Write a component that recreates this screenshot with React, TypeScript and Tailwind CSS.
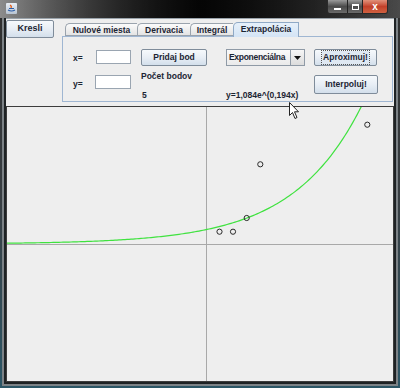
import React from "react";

const F = "font-['Liberation_Sans',Arial,sans-serif]";

function Btn({ w, h, children, focus }: { w: string; h: string; children: React.ReactNode; focus?: boolean }) {
  return (
    <div
      className={`${w} ${h} flex items-center justify-center rounded-[2px] border border-[#7f8c9a] bg-gradient-to-b from-[#f6f9fc] via-[#e8eef5] to-[#d3dfeb] text-[8.5px] font-bold text-[#1c2533]`}
    >
      <span className={focus ? "px-[1px] outline outline-1 outline-dotted outline-[#555] bg-[#dfe8f2]" : ""}>{children}</span>
    </div>
  );
}

function Field({ w }: { w: string }) {
  return <div className={`${w} h-[14px] border border-[#9aa5b1] bg-white`} />;
}

function Tab({ w, label, selected }: { w: string; label: string; selected?: boolean }) {
  return (
    <div
      className={`${w} ${
        selected
          ? "h-[15px] bg-gradient-to-b from-[#e6f0fa] to-[#d4e4f5] border-[#8fa9c6] z-10 -mb-[1px] border-b-0"
          : "h-[13px] bg-gradient-to-b from-[#fbfbfb] to-[#e4e4e4] border-[#9aa3ad]"
      } border border-r-0 last:border-r relative flex items-start justify-center pt-[1px] rounded-tl-[5px] text-[8.5px] font-bold text-[#1c2533] leading-[11px]`}
    >
      {label}
    </div>
  );
}

export default function App() {
  const pts: string[] = [];
  for (let sx = 0; sx <= 362; sx += 2) {
    const u = (sx - 199.5) / 13.33;
    const y = 137 - 13.33 * 1.084 * Math.exp(0.194 * u);
    pts.push(`${sx},${y.toFixed(2)}`);
  }
  const dots: [number, number][] = [
    [212.5, 124.7],
    [226, 124.7],
    [239.7, 111],
    [253.3, 57.3],
    [360.3, 17.7],
  ];

  return (
    <div className={`${F} relative w-[400px] h-[388px] overflow-hidden bg-gradient-to-b from-[#2e2e2e] via-[#383e42] to-[#2b5666] flex flex-col`}>
      {/* title bar */}
      <div className="h-[18px] shrink-0 flex items-start bg-gradient-to-r from-[#8c8c8c] via-[#0c0c0c] to-[#4a4a4a] relative">
        <div className="absolute inset-0 bg-gradient-to-r from-transparent via-[#000000] to-transparent opacity-60" />
        <div className="relative ml-[6px] mt-[3px] w-[11px] h-[11px] rounded-[1px] bg-gradient-to-b from-[#e9eef5] to-[#b8c4d2] flex items-center justify-center">
          <svg width="9" height="9" viewBox="0 0 9 9">
            <path d="M3 1 Q5 2 4 4" stroke="#e65a10" strokeWidth="1.2" fill="none" />
            <path d="M1 6 Q4.5 8 8 6" stroke="#2a5da8" strokeWidth="1.2" fill="none" />
            <path d="M2 4.5 L7 4.5" stroke="#2a5da8" strokeWidth="1" />
          </svg>
        </div>
        <div className="flex-1" />
        <div className="relative mr-[12px] flex h-[14px] border border-t-0 border-[#2a2a2a] rounded-b-[3px] overflow-hidden">
          <div className="w-[20px] h-full bg-gradient-to-b from-[#9a9a9a] via-[#4a4a4a] to-[#6a6a6a] flex items-end justify-center pb-[3px] border-r border-[#222]">
            <div className="w-[7px] h-[2px] bg-white" />
          </div>
          <div className="w-[15px] h-full bg-gradient-to-b from-[#9a9a9a] via-[#4a4a4a] to-[#6a6a6a] flex items-center justify-center border-r border-[#222]">
            <div className="w-[7px] h-[6px] border border-white border-t-2" />
          </div>
          <div className="w-[24px] h-full bg-gradient-to-b from-[#e0907a] via-[#c2402a] to-[#d06040] flex items-center justify-center">
            <span className="text-white text-[10px] font-bold leading-none">x</span>
          </div>
        </div>
      </div>

      {/* frame + client */}
      <div className="h-[370px] shrink-0 px-[2px] pb-[2px]">
        <div className="h-full border-x-2 border-b-2 border-[#7c8286] px-[2px] pb-[2px] bg-[#1e2224]">
          <div className="h-[364px] bg-[#eeeeee] flex flex-col border-t border-[#9aa3ab]">
            <div className="h-[87px] shrink-0 flex items-start">
              <div className="mt-[1px]">
                <Btn w="w-[48px]" h="h-[18px]">
                  <span className="text-[9px]">Kresli</span>
                </Btn>
              </div>
              <div className="ml-[8px] mt-[3px] w-[331px] flex flex-col">
                <div className="h-[14px] flex items-end pl-[3px]">
                  <Tab w="w-[72px]" label="Nulové miesta" />
                  <Tab w="w-[53px]" label="Derivacia" />
                  <Tab w="w-[43px]" label="Integrál" />
                  <Tab w="w-[66px]" label="Extrapolácia" selected />
                </div>
                <div className="h-[66px] border border-[#9fb6d2] bg-[#eeeeee] flex pl-[10px] pt-[12px] text-[8.5px] font-bold text-[#1c2533]">
                  <div className="w-[23px] flex flex-col">
                    <div className="mt-[4px] h-[10px] leading-[10px]">x=</div>
                    <div className="mt-[16px] h-[10px] leading-[10px]">y=</div>
                  </div>
                  <div className="w-[45px] flex flex-col">
                    <div className="mt-[1px]"><Field w="w-[35px]" /></div>
                    <div className="mt-[11px] -ml-[1px]"><Field w="w-[36px]" /></div>
                  </div>
                  <div className="w-[85px] flex flex-col">
                    <Btn w="w-[66px]" h="h-[17px]">Pridaj bod</Btn>
                    <div className="mt-[5px] h-[10px] leading-[10px]">Počet bodov</div>
                    <div className="mt-[9px] ml-[1px] h-[10px] leading-[10px]">5</div>
                  </div>
                  <div className="w-[88px] flex flex-col">
                    <div className="flex h-[17px]">
                      <div className="w-[65px] h-full border border-[#8f9aa6] bg-gradient-to-b from-[#fafafa] to-[#eaeaea] flex items-center pl-[2px] leading-none text-[8.5px] tracking-[-0.3px] whitespace-nowrap overflow-hidden">
                        Exponenciálna
                      </div>
                      <div className="w-[14px] h-full border border-l-0 border-[#8f9aa6] bg-gradient-to-b from-[#f6f6f6] to-[#dcdcdc] flex items-center justify-center">
                        <svg width="7" height="4" viewBox="0 0 7 4"><path d="M0 0 L7 0 L3.5 4 Z" fill="#111" /></svg>
                      </div>
                    </div>
                    <div className="mt-[24px] h-[10px] leading-[10px]">y=1,084e^(0,194x)</div>
                  </div>
                  <div className="flex flex-col">
                    <Btn w="w-[63px]" h="h-[17px]" focus>Aproximuj!</Btn>
                    <div className="mt-[9px]">
                      <Btn w="w-[64px]" h="h-[19px]">Interpoluj!</Btn>
                    </div>
                  </div>
                </div>
              </div>
            </div>

            {/* canvas */}
            <div className="h-[276px] shrink-0 border border-[#3c3c3c] bg-[#eeeeee] overflow-hidden">
              <svg width="386" height="274" viewBox="0 0 386 274" className="block">
                <line x1="199.5" y1="0" x2="199.5" y2="274" stroke="#a8a8a8" strokeWidth="1" />
                <line x1="0" y1="137.5" x2="386" y2="137.5" stroke="#a8a8a8" strokeWidth="1" />
                <polyline points={pts.join(" ")} fill="none" stroke="#3fe23f" strokeWidth="1.2" />
                {dots.map(([x, y], i) => (
                  <circle key={i} cx={x} cy={y} r="2.6" fill="none" stroke="#2a2a2a" strokeWidth="1" />
                ))}
              </svg>
            </div>
          </div>
        </div>
      </div>

      {/* mouse cursor overlay */}
      <svg className="absolute left-[289px] top-[102px]" width="12" height="18" viewBox="0 0 12 18">
        <path d="M0.5 0.5 L0.5 13.5 L3.5 10.5 L6 16.5 L8 15.5 L5.5 9.8 L9.5 9.8 Z" fill="#fff" stroke="#222" strokeWidth="1" strokeLinejoin="round" />
      </svg>
    </div>
  );
}
